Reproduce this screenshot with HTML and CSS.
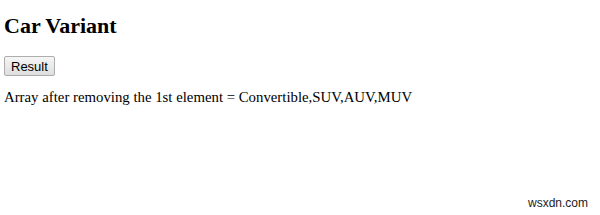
FILE: index.html
```
<!DOCTYPE html>
<html lang="en">

<head>
  <meta charset="UTF-8">
  <meta name="viewport" content="width=device-width, initial-scale=1.0">
  <title>Car Variant</title>
  <link rel="stylesheet" href="styles.css">
</head>

<body>
  <h2 class="title">Car Variant</h2>
  <button class="result-button">Result</button>
  <p class="result">Array after removing the 1st element = Convertible,SUV,AUV,MUV</p>
  <span class="watermark">wsxdn.com</span>
</body>

</html>
```
FILE: styles.css
```
body {
  margin: 4px;
  font-family: "Liberation Serif", serif;
  font-size: 14.8px;
  color: #000;
  background-color: #fff;
}

.title {
  font-size: 22px;
  margin: 9px 0 17px;
}

.result-button {
  font-family: "Liberation Sans", sans-serif;
  font-size: 13px;
  height: 20px;
  padding: 0 6px;
  border: 1px solid #adadad;
  border-radius: 2px;
  background: linear-gradient(#f6f6f6, #dedede);
}

.result {
  margin: 13px 0;
}

.watermark {
  position: absolute;
  right: 12px;
  bottom: 5px;
  font-family: "Liberation Sans", sans-serif;
  font-size: 12px;
  color: #222;
}
```
